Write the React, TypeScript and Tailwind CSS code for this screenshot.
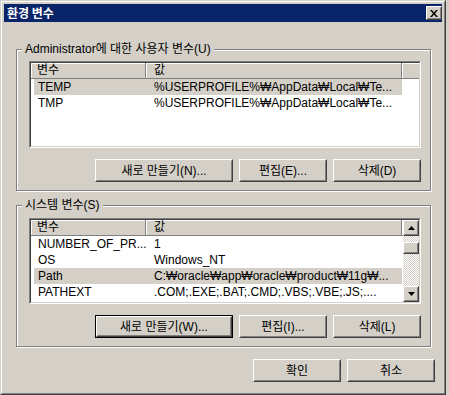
import React from "react";

type Row = { name: string; value: string; selected?: boolean };

const USER_VARS: Row[] = [
  { name: "TEMP", value: "%USERPROFILE%₩AppData₩Local₩Te...", selected: true },
  { name: "TMP", value: "%USERPROFILE%₩AppData₩Local₩Te..." },
];

const SYSTEM_VARS: Row[] = [
  { name: "NUMBER_OF_PR...", value: "1" },
  { name: "OS", value: "Windows_NT" },
  { name: "Path", value: "C:₩oracle₩app₩oracle₩product₩11g₩...", selected: true },
  { name: "PATHEXT", value: ".COM;.EXE;.BAT;.CMD;.VBS;.VBE;.JS;...." },
  { name: "PROCESSOR_AR...", value: "x86" },
];

// 클래식 윈도우 볼록 테두리
const Bevel = ({ children, className = "" }: { children?: React.ReactNode; className?: string }) => (
  <div className={`border border-t-white border-l-white border-r-[#404040] border-b-[#404040] bg-[#d4d0c8] ${className}`}>
    <div className="h-full flex items-center justify-center border border-t-[#d4d0c8] border-l-[#d4d0c8] border-r-[#808080] border-b-[#808080]">
      {children}
    </div>
  </div>
);

const Button = ({ children, width, isDefault = false }: { children: React.ReactNode; width: string; isDefault?: boolean }) => (
  <div className={`h-[23px] ${width} ${isDefault ? "border border-black" : ""}`}>
    <Bevel className="h-full">
      <span className="leading-[14px] whitespace-nowrap">{children}</span>
    </Bevel>
  </div>
);

const GroupBox = ({ label, children }: { label: string; children: React.ReactNode }) => (
  <div className="relative ml-[12px] w-[415px] border border-[#808080] shadow-[inset_1px_1px_0_#ffffff,1px_1px_0_#ffffff] pl-[12px] pr-[9px] pb-[8px]">
    <span className="absolute left-[5px] -top-[8px] px-[3px] bg-[#d4d0c8] leading-[14px] whitespace-nowrap">{label}</span>
    {children}
  </div>
);

const Arrow = ({ up }: { up: boolean }) => (
  <svg width="7" height="4" viewBox="0 0 7 4" className="block">
    {up ? <polygon points="3.5,0 7,4 0,4" fill="#000" /> : <polygon points="0,0 7,0 3.5,4" fill="#000" />}
  </svg>
);

const ScrollBar = () => (
  <div className="w-[16px] shrink-0 flex flex-col bg-[repeating-conic-gradient(#d4d0c8_0%_25%,#ffffff_0%_50%)] bg-size-[2px_2px]">
    <Bevel className="h-[16px] shrink-0">
      <Arrow up />
    </Bevel>
    <div className="h-[6px] shrink-0" />
    <Bevel className="h-[12px] shrink-0" />
    <div className="flex-1" />
    <Bevel className="h-[16px] shrink-0">
      <Arrow up={false} />
    </Bevel>
  </div>
);

const ListView = ({ rows, height, scroll = false }: { rows: Row[]; height: string; scroll?: boolean }) => (
  <div className={`${height} border border-t-[#808080] border-l-[#808080] border-r-white border-b-white`}>
    <div className="h-full flex bg-white overflow-hidden border border-t-[#404040] border-l-[#404040] border-r-[#d4d0c8] border-b-[#d4d0c8]">
      <div className="flex-1 min-w-0 flex flex-col">
        {/* 헤더 */}
        <div className="flex h-[16px] shrink-0 bg-[#d4d0c8] leading-[15px]">
          <div className="w-[115px] shrink-0 pl-[6px] border-r border-b border-[#808080] shadow-[inset_1px_1px_0_#ffffff]">변수</div>
          <div className="w-[256px] shrink-0 pl-[8px] border-r border-b border-[#808080] shadow-[inset_1px_1px_0_#ffffff]">값</div>
          <div className="flex-1 border-b border-[#808080] shadow-[inset_1px_1px_0_#ffffff]" />
        </div>
        {/* 항목 */}
        {rows.map((row) => (
          <div
            key={row.name}
            className={`ml-[3px] w-[368px] h-[16px] shrink-0 flex leading-[16px] ${row.selected ? "bg-[#d4d0c8]" : ""}`}
          >
            <div className="w-[112px] shrink-0 pl-[4px] whitespace-nowrap overflow-hidden">{row.name}</div>
            <div className="flex-1 pl-[8px] whitespace-nowrap overflow-hidden">{row.value}</div>
          </div>
        ))}
      </div>
      {scroll && <ScrollBar />}
    </div>
  </div>
);

const CloseButton = () => (
  <Bevel className="w-[16px] h-[14px]">
    <svg width="8" height="7" viewBox="0 0 8 7" className="block">
      <path d="M0 0h2l2 2.4L6 0h2L5 3.5 8 7H6L4 4.6 2 7H0l3-3.5z" fill="#000" />
    </svg>
  </Bevel>
);

export default function App() {
  return (
    <div className="w-[449px] h-[395px] flex bg-[#d4d0c8] text-[12px] text-black font-['Liberation_Sans','DejaVu_Sans','Noto_Sans_CJK_KR',sans-serif]">
      <div className="w-[446px] h-full border border-t-[#d4d0c8] border-l-[#d4d0c8] border-r-[#404040] border-b-[#404040]">
        <div className="h-full flex flex-col p-[2px] border border-t-white border-l-white border-r-[#808080] border-b-[#808080]">
          {/* 제목 표시줄 */}
          <div className="h-[18px] shrink-0 bg-[#0a246a] flex items-center justify-between pl-[3px]">
            <span className="text-white font-bold leading-[18px] font-['Noto_Sans_CJK_KR',sans-serif]">환경 변수</span>
            <CloseButton />
          </div>

          {/* 사용자 변수 */}
          <div className="mt-[27px]">
            <GroupBox label="Administrator에 대한 사용자 변수(U)">
              <div className="pt-[11px]">
                <ListView rows={USER_VARS} height="h-[87px]" />
              </div>
              <div className="mt-[11px] flex justify-end gap-[6px]">
                <Button width="w-[138px]">새로 만들기(N)...</Button>
                <Button width="w-[88px]">편집(E)...</Button>
                <Button width="w-[88px]">삭제(D)</Button>
              </div>
            </GroupBox>
          </div>

          {/* 시스템 변수 */}
          <div className="mt-[14px]">
            <GroupBox label="시스템 변수(S)">
              <div className="pt-[12px]">
                <ListView rows={SYSTEM_VARS} height="h-[86px]" scroll />
              </div>
              <div className="mt-[11px] flex justify-end gap-[6px]">
                <Button width="w-[138px]" isDefault>새로 만들기(W)...</Button>
                <Button width="w-[88px]">편집(I)...</Button>
                <Button width="w-[88px]">삭제(L)</Button>
              </div>
            </GroupBox>
          </div>

          {/* 확인 / 취소 */}
          <div className="mt-[12px] flex justify-end gap-[6px] pr-[7px]">
            <Button width="w-[88px]">확인</Button>
            <Button width="w-[88px]">취소</Button>
          </div>
        </div>
      </div>
    </div>
  );
}
